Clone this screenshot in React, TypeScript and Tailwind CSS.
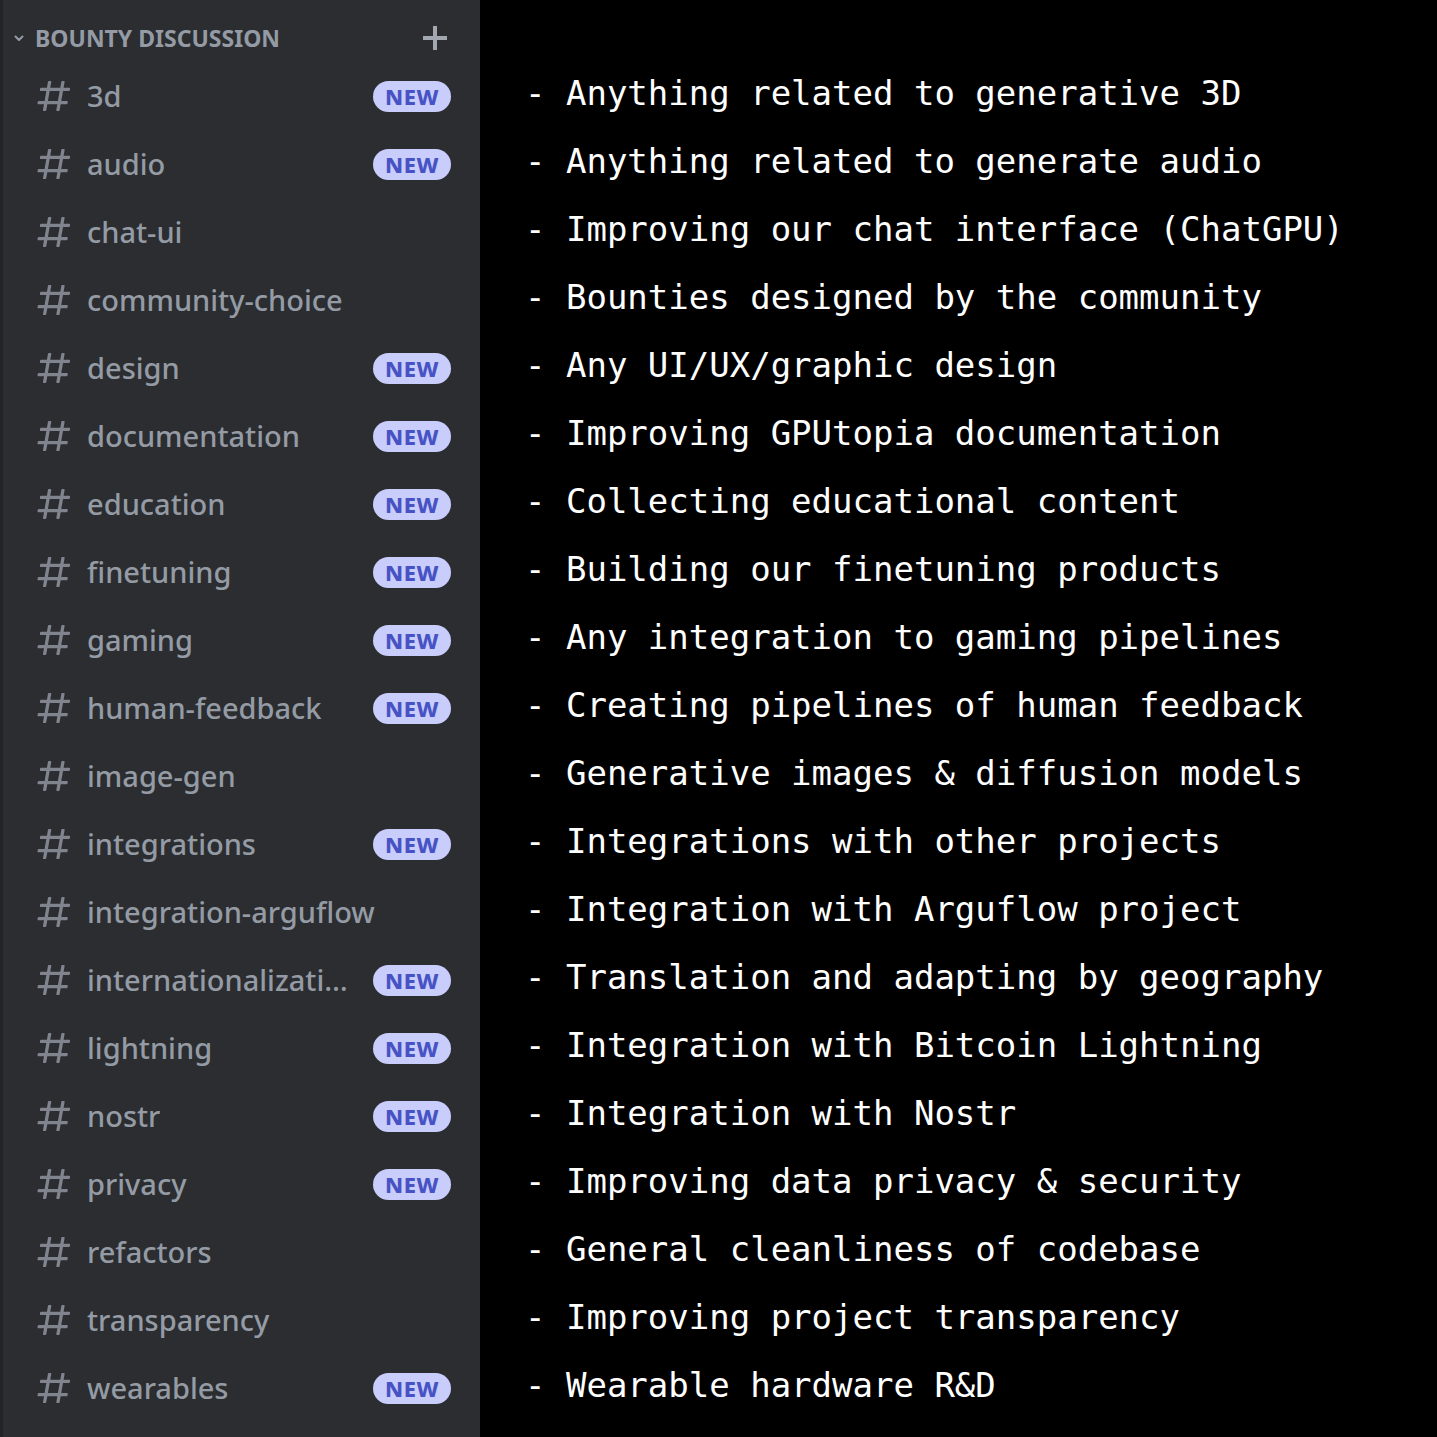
import React from "react";

const channels: { name: string; isNew: boolean }[] = [
  { name: "3d", isNew: true },
  { name: "audio", isNew: true },
  { name: "chat-ui", isNew: false },
  { name: "community-choice", isNew: false },
  { name: "design", isNew: true },
  { name: "documentation", isNew: true },
  { name: "education", isNew: true },
  { name: "finetuning", isNew: true },
  { name: "gaming", isNew: true },
  { name: "human-feedback", isNew: true },
  { name: "image-gen", isNew: false },
  { name: "integrations", isNew: true },
  { name: "integration-arguflow", isNew: false },
  { name: "internationalization", isNew: true },
  { name: "lightning", isNew: true },
  { name: "nostr", isNew: true },
  { name: "privacy", isNew: true },
  { name: "refactors", isNew: false },
  { name: "transparency", isNew: false },
  { name: "wearables", isNew: true },
];

const lines = [
  "Anything related to generative 3D",
  "Anything related to generate audio",
  "Improving our chat interface (ChatGPU)",
  "Bounties designed by the community",
  "Any UI/UX/graphic design",
  "Improving GPUtopia documentation",
  "Collecting educational content",
  "Building our finetuning products",
  "Any integration to gaming pipelines",
  "Creating pipelines of human feedback",
  "Generative images & diffusion models",
  "Integrations with other projects",
  "Integration with Arguflow project",
  "Translation and adapting by geography",
  "Integration with Bitcoin Lightning",
  "Integration with Nostr",
  "Improving data privacy & security",
  "General cleanliness of codebase",
  "Improving project transparency",
  "Wearable hardware R&D",
];

function Hash() {
  return (
    <svg width="40" height="40" viewBox="0 0 24 24" className="shrink-0" fill="#80848e">
      <path
        fillRule="evenodd"
        d="M5.88657 21C5.57547 21 5.3399 20.7189 5.39427 20.4126L6.00001 17H2.59511C2.28449 17 2.04905 16.7198 2.10259 16.4138L2.27759 15.4138C2.31946 15.1746 2.52722 15 2.77011 15H6.35001L7.41001 9H4.00511C3.69449 9 3.45905 8.71977 3.51259 8.41381L3.68759 7.41381C3.72946 7.17456 3.93722 7 4.18011 7H7.76001L8.39677 3.41262C8.43914 3.17391 8.64664 3 8.88907 3H9.87344C10.1845 3 10.4201 3.28107 10.3657 3.58738L9.76001 7H15.76L16.3968 3.41262C16.4391 3.17391 16.6466 3 16.8891 3H17.8734C18.1845 3 18.4201 3.28107 18.3657 3.58738L17.76 7H21.1649C21.4755 7 21.711 7.28023 21.6574 7.58619L21.4824 8.58619C21.4406 8.82544 21.2328 9 20.9899 9H17.41L16.35 15H19.7549C20.0655 15 20.301 15.2802 20.2474 15.5862L20.0724 16.5862C20.0306 16.8254 19.8228 17 19.5799 17H16L15.3632 20.5874C15.3209 20.8261 15.1134 21 14.8709 21H13.8866C13.5755 21 13.3399 20.7189 13.3943 20.4126L14 17H8.00001L7.36325 20.5874C7.32088 20.8261 7.11337 21 6.87094 21H5.88657ZM9.41045 9L8.35045 15H14.3504L15.4104 9H9.41045Z"
      />
    </svg>
  );
}

export default function App() {
  return (
    <div className="flex w-[1437px] h-[1437px] overflow-hidden bg-black">
      <div className="w-[480px] h-full bg-[#2b2d31] border-l-[3px] border-[#232428] flex flex-col pt-[14px]" style={{ fontFamily: '"Noto Sans", Inter, sans-serif' }}>
        <div className="h-[48px] flex items-center pl-[10px] pr-[32px] text-[#949ba4]">
          <svg width="12" height="12" viewBox="0 0 12 12" fill="none" stroke="#949ba4" strokeWidth="2" strokeLinecap="round" strokeLinejoin="round" className="shrink-0">
            <path d="M2.5 4.5L6 8L9.5 4.5" />
          </svg>
          <span className="ml-[10px] text-[23px] font-bold leading-[30px]">BOUNTY DISCUSSION</span>
          <div className="flex-1" />
          <svg width="26" height="26" viewBox="0 0 26 26" stroke="#a3a8b0" strokeWidth="4" className="shrink-0">
            <path d="M13 1V25M1 13H25" />
          </svg>
        </div>
        {channels.map((c) => (
          <div key={c.name} className="h-[68px] flex items-center pl-[31px] pr-[26px]">
            <Hash />
            <span className="ml-[13px] flex-1 min-w-0 truncate text-[29px] font-medium text-[#949ba4] leading-[44px]">
              {c.name}
            </span>
            {c.isNew && (
              <span className="ml-[20px] mr-[3px] shrink-0 w-[78px] h-[31px] rounded-full bg-[#c9cdfb] text-[#4752c4] text-[22px] font-extrabold flex items-center justify-center leading-none tracking-[0.5px]">
                NEW
              </span>
            )}
          </div>
        ))}
      </div>
      <div className="flex-1 pt-[59px] pl-[45px] text-white" style={{ fontFamily: '"DejaVu Sans Mono", "Liberation Mono", monospace' }}>
        {lines.map((l) => (
          <div key={l} className="h-[68px] flex items-center text-[34px] whitespace-pre leading-[44px]">
            {"- " + l}
          </div>
        ))}
      </div>
    </div>
  );
}
